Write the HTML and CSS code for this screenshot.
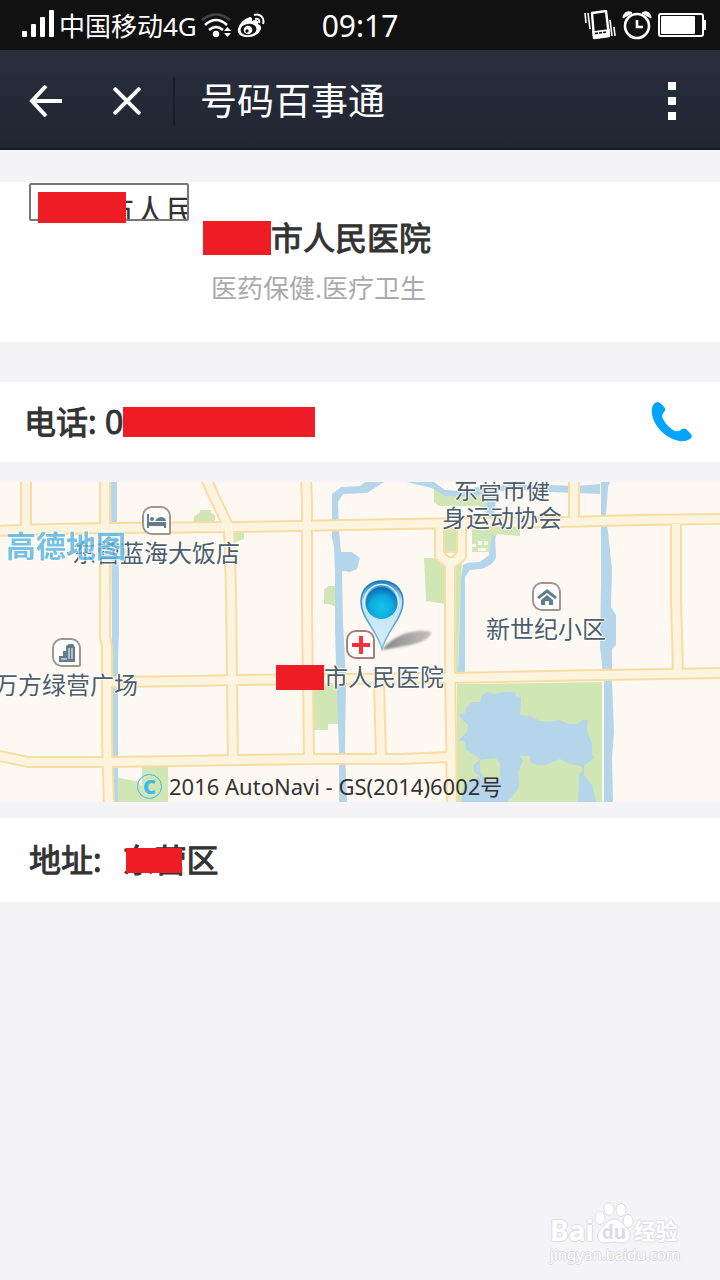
FILE: index.html
```html
<!DOCTYPE html>
<html lang="zh-CN">
<head>
    <meta charset="UTF-8">
    <meta name="viewport" content="width=device-width, initial-scale=1.0">
    <title>号码百事通</title>
    <link rel="stylesheet" href="styles.css">
</head>
<body>
    <div class="status-bar">
        <div class="status-left">
            <svg class="signal" width="34" height="28" viewBox="0 0 34 28" fill="#fff">
                <rect x="1" y="21" width="5" height="6" rx="1"/>
                <rect x="10" y="14" width="5" height="13" rx="1"/>
                <rect x="19" y="7" width="5" height="20" rx="1"/>
                <rect x="28" y="0" width="5" height="27" rx="1"/>
            </svg>
            <span class="carrier">中国移动4G</span>
            <svg width="32" height="26" viewBox="0 0 32 26" fill="none" stroke="#fff" stroke-width="2.6">
                <path d="M1 7 Q15 -4 29 7" stroke="#444"/>
                <path d="M4 12 Q15 2 26 12"/>
                <path d="M8 17 Q15 11 22 17"/>
                <circle cx="15" cy="21" r="3.200" fill="#fff" stroke="none"/>
                <path d="M23 18 l3.500 -4 3.500 4z M23 20 l3.500 4 3.500 -4z" fill="#fff" stroke="none"/>
            </svg>
            <svg width="28" height="26" viewBox="0 0 28 26">
                <path d="M11 5 C13 3 16 4 15 8 C19 6 22 7 21 11 C24 12 25 15 23 18 C20 23 14 24 10 24 C4 24 0 21 1 16 C2 11 7 6 11 5z" fill="#fff"/>
                <ellipse cx="11.500" cy="16.500" rx="8" ry="5.600" fill="#111" transform="rotate(-8 11.500 16.500)"/>
                <circle cx="11" cy="17" r="4.300" fill="#fff"/>
                <circle cx="10" cy="18" r="1.700" fill="#111"/>
                <path d="M17 2 C23 0 28 5 26 11 M18 6 C21 5 23 7 22 10" fill="none" stroke="#fff" stroke-width="2"/>
            </svg>
        </div>
        <time class="clock">09:17</time>
        <div class="status-right">
            <svg width="32" height="30" viewBox="0 0 32 30" fill="none" stroke="#fff" stroke-width="1.600">
                <path d="M1 3 L2 13 M4 3 L6 19 M26 10 L28 26 M30 17 L31 26"/>
                <path d="M8 3 L22 1 L25 26 L10 28z" stroke-width="2.400" stroke-linejoin="round"/>
                <path d="M9 22 L25 20 L25 26 L10 28z" fill="#fff"/>
                <path d="M11 23.500 L23 22" stroke="#111" stroke-dasharray="3 1"/>
            </svg>
            <svg width="30" height="30" viewBox="0 0 30 30" fill="none" stroke="#fff">
                <circle cx="15" cy="16" r="12" stroke-width="2.600"/>
                <path d="M15 10 V17 H21" stroke-width="2.600"/>
                <path d="M1 8 C1 3 6 0 10 3z M29 8 C29 3 24 0 20 3z" fill="#fff" stroke-width="1"/>
            </svg>
            <svg width="48" height="26" viewBox="0 0 48 26">
                <rect x="1" y="2" width="44" height="22" rx="2" fill="none" stroke="#fff" stroke-width="2"/>
                <rect x="3" y="4" width="34" height="18" rx="1" fill="#fff"/>
                <rect x="45" y="8" width="3" height="10" fill="#fff"/>
            </svg>
        </div>
    </div>

    <header class="nav-bar">
        <button class="nav-btn" type="button" aria-label="返回">
            <svg width="34" height="32" viewBox="0 0 34 32" fill="none" stroke="#fff" stroke-width="4">
                <path d="M17 1 L3 16 L17 31 M2 16 H33"/>
            </svg>
        </button>
        <button class="nav-btn close" type="button" aria-label="关闭">
            <svg width="28" height="28" viewBox="0 0 28 28" fill="none" stroke="#fff" stroke-width="4">
                <path d="M1 1 L27 27 M27 1 L1 27"/>
            </svg>
        </button>
        <h1 class="nav-title">号码百事通</h1>
        <button class="nav-btn more" type="button" aria-label="更多">
            <svg width="8" height="38" viewBox="0 0 8 38" fill="#fff">
                <rect y="0" width="8" height="8"/>
                <rect y="15" width="8" height="8"/>
                <rect y="30" width="8" height="8"/>
            </svg>
        </button>
    </header>

    <main>
        <section class="card profile">
            <div class="logo-wrap">
                <div class="logo">市人民</div>
                <span class="mask mask-logo"></span>
            </div>
            <div class="profile-text">
                <h2 class="name"><span class="mask mask-name"></span>市人民医院</h2>
                <p class="category">医药保健.医疗卫生</p>
            </div>
        </section>

        <section class="card phone">
            <p class="row-text">电话: 0<span class="mask mask-phone"></span></p>
            <a class="call" href="tel:0" aria-label="拨打电话">
                <svg width="42" height="42" viewBox="0 0 42 42" fill="#00a5fb">
                    <path d="M7 1 Q9 1 14 7 Q15 9 13 11 Q10 14 12 18 Q16 26 24 30 Q28 31 31 28 Q33 27 35 28 L40 33 Q42 36 39 38 Q34 41 28 40 Q11 36 3 20 Q-1 11 2 4 Q4 1 7 1z"/>
                </svg>
            </a>
        </section>

        <section class="map">
            <svg class="terrain" width="720" height="320" viewBox="0 0 720 320">
                <!-- parks -->
                <g fill="#d0e7b5">
                    <path d="M434 7 L445 10 L480 12 L488 9 V34 L480 24 H439 L434 20z"/>
                    <path d="M472 46 H520 V54 L497 52 L491 70 H472z"/>
                    <path d="M324 108 L328 104 H340 V126 L328 122 H324z"/>
                    <path d="M424 76 H446 V122 L426 119z"/>
                    <path d="M455 78 H462 L460 122 L458 190 H454z"/>
                    <path d="M313 202 H340 V242 H328 V248 H313z"/>
                    <path d="M194 35 L200 30 V28 H211 V31 L215 33 V41 H194z"/>
                    <path d="M235 51 H244 V57 L235 60z"/>
                    <path d="M46 70 L54 68 V75 H46z"/>
                    <path d="M114 295 L136 299 L142 304 V284 H168 V320 H114z"/>
                    <path d="M457 202 H480 L602 200 V320 H457z"/>
                </g>
                <path d="M478 59 h4 v4 h-4z M484 59 h4 v4 h-4z M472 62 h4 v3 h-4z M478 66 h8 v3 h-8z" fill="#fdf9f2"/>
                <!-- rivers and lake -->
                <g fill="#b4d5ea">
                    <path d="M111 0 H117 V50 L119 90 L119 150 L118 180 V320 H113z"/>
                    <path d="M365 0 H384 L367 11 L343 12 L338 20 L339 48 L341 70 H352 L360 76 L357 87 L350 90 L342 89 L343 140 L346 198 L345 270 L347 320 H339 V270 L335 150 V90 L334 65 L332 55 V12 L341 5 L360 4z"/>
                    <path d="M406 0 H434 L445 8 L460 9 L482 4 L520 3 L550 3 L575 4 L600 2 V12 L575 11 L550 10 L520 8 L497 9 L494 35 H487 L487 12 L470 14 L445 14 L432 6z"/>
                    <path d="M492 53 L495 54 L496 75 Q492 85 480 87 L470 88 L465 95 V190 H458 L461 97 L463 83 Q466 80 480 80 L489 73z"/>
                    <path d="M601 0 H610 L608 5 L606 35 L608 50 L612 88 L611 125 L616 133 V163 L612 167 V200 L614 250 L612 275 L613 320 H604 V200 L600 165 L601 100z"/>
                    <path d="M458 233 L465 231 L466 226 L472 220 H480 L482 213 L487 210 L494 212 L504 210 H515 L516 214 L521 215 L520 233 L530 234 L540 239 L550 240 L560 238 L568 242 L578 242 L583 238 L588 238 L587 248 L592 262 V272 L594 276 L584 284 V293 L592 303 L596 320 H578 L579 292 L583 288 L581 284 L570 282 L560 277 L545 283 L538 283 L530 280 V274 H520 L523 279 L518 290 L519 305 L512 315 L508 318 V320 H461 L463 308 L468 300 L480 294 L474 290 L473 284 L480 277 L473 272 L466 268 L465 260 L459 258 L467 250 L468 243z"/>
                </g>
                <path d="M480 278 L496 276 L500 282 V298 H486 L480 290z" fill="#d0e7b5"/>
                <!-- road edges, then road surface on top -->
                <g fill="none" stroke-linejoin="round">
                    <g stroke="#f9dca3" stroke-width="12">
                        <path d="M26 -5 V44 M105 -5 V155 L107 165 V260 L109 325 M205 -5 L229 46 L231 110 L232 200 L233 277"/>
                        <path d="M306 -5 L307 20 V130 L309 277 M379 200 L381 277 M574 -5 V40 M676 42 V120 L678 190"/>
                        <path d="M440 40 V74 L447 80 H454 L461 74 V40 M450 80 V180 L452 325"/>
                        <path d="M-5 49 L50 47 L110 46 L240 45 L350 43 L400 42 L480 41 L560 40 L640 38 L725 37"/>
                        <path d="M110 200 L190 199 L240 198 L450 196 L500 195 L600 193 L725 191"/>
                        <path d="M-5 273 L28 280 L110 280 L180 279 L240 278 L320 277 L400 277 L452 275"/>
                    </g>
                    <g stroke="#fcf4df" stroke-width="8">
                        <path d="M26 -5 V44 M105 -5 V155 L107 165 V260 L109 325 M205 -5 L229 46 L231 110 L232 200 L233 277"/>
                        <path d="M306 -5 L307 20 V130 L309 277 M379 200 L381 277 M574 -5 V40 M676 42 V120 L678 190"/>
                        <path d="M440 40 V74 L447 80 H454 L461 74 V40 M450 80 V180 L452 325"/>
                        <path d="M-5 49 L50 47 L110 46 L240 45 L350 43 L400 42 L480 41 L560 40 L640 38 L725 37"/>
                        <path d="M110 200 L190 199 L240 198 L450 196 L500 195 L600 193 L725 191"/>
                        <path d="M-5 273 L28 280 L110 280 L180 279 L240 278 L320 277 L400 277 L452 275"/>
                    </g>
                </g>
                <path d="M444 48 H457 V70 H444z" fill="#d0e7b5" stroke="#f9dca3" stroke-width="2"/>
            </svg>

            <span class="label label-hotel">东营蓝海大饭店</span>
            <span class="label label-plaza">万方绿营广场</span>
            <span class="label label-sports">东营市健<br>身运动协会</span>
            <span class="label label-estate">新世纪小区</span>
            <span class="label label-hospital"><span class="mask mask-label"></span>市人民医院</span>

            <span class="poi poi-hotel">
                <svg width="20" height="16" viewBox="0 0 20 16" fill="#627d8d">
                    <path d="M0 1 H2 V9 H19 V15 H17 V13 H2 V15 H0z"/>
                    <circle cx="5" cy="6" r="2"/>
                    <path d="M8 8 Q10 4 15 4 Q19 5 19 8z"/>
                </svg>
            </span>
            <span class="poi poi-plaza">
                <svg width="20" height="20" viewBox="0 0 20 20" fill="#627d8d">
                    <path d="M2 13 H6 V8 H9 V3 L12 1 H16 L18 4 V19 H2z"/>
                    <path d="M12 5 V16 M15 5 V16 M4 16 H10" stroke="#fff"/>
                </svg>
            </span>
            <span class="poi poi-estate">
                <svg width="20" height="18" viewBox="0 0 20 18" fill="#627d8d">
                    <path d="M10 1 L20 9 L18 11 L10 5 L2 11 L0 9z"/>
                    <path d="M10 7 L16 12 V17 H12 V13 H8 V17 H4 V12z"/>
                </svg>
            </span>
            <span class="poi poi-hospital">
                <svg width="18" height="18" viewBox="0 0 18 18" fill="#ff3038">
                    <path d="M7 0 H11 V7 H18 V11 H11 V18 H7 V11 H0 V7 H7z"/>
                </svg>
            </span>

            <svg class="marker" width="76" height="74" viewBox="0 0 76 74">
                <defs>
                    <linearGradient id="pin" x1="0" y1="0" x2="0" y2="1">
                        <stop offset="0" stop-color="#1583bf"/>
                        <stop offset="0.300" stop-color="#bfe2f5"/>
                        <stop offset="1" stop-color="#d9eef8"/>
                    </linearGradient>
                    <linearGradient id="edge" x1="0" y1="0" x2="0" y2="1">
                        <stop offset="0" stop-color="#1677b0"/>
                        <stop offset="1" stop-color="#7fc3e4"/>
                    </linearGradient>
                    <radialGradient id="ball" cx="0.500" cy="0.650" r="0.600">
                        <stop offset="0" stop-color="#13c4ec"/>
                        <stop offset="0.600" stop-color="#0fa9de"/>
                        <stop offset="1" stop-color="#0c71b2"/>
                    </radialGradient>
                    <linearGradient id="shade" x1="0" y1="0" x2="1" y2="0">
                        <stop offset="0" stop-color="#777" stop-opacity="0.900"/>
                        <stop offset="1" stop-color="#999" stop-opacity="0.600"/>
                    </linearGradient>
                    <filter id="soft"><feGaussianBlur stdDeviation="1"/></filter>
                </defs>
                <path d="M22 70 Q34 54 58 51 Q72 50 71 54 Q67 62 45 66z" fill="url(#shade)" filter="url(#soft)"/>
                <path d="M22 69 C17 50 1 38 1 22 C1 9 10 1 22 1 C34 1 43 9 43 22 C43 38 27 50 22 69z" fill="url(#pin)" stroke="url(#edge)" stroke-width="1.500"/>
                <circle cx="21.500" cy="21.500" r="17" fill="none" stroke="#d9effa" stroke-width="1.600"/>
                <circle cx="21.500" cy="23" r="16" fill="url(#ball)"/>
            </svg>

            <span class="map-brand">高德地图</span>
            <p class="copyright"><span class="c-mark">C</span>2016 AutoNavi - GS(2014)6002号</p>
        </section>

        <section class="card address">
            <p class="row-text">地址:</p>
            <p class="row-text district">东营区<span class="mask mask-address"></span></p>
        </section>
    </main>

    <footer class="watermark">
        <div class="wm-brand">
            <span>Bai</span>
            <svg width="40" height="42" viewBox="0 0 40 42" fill="#fff" stroke="#dcdce1">
                <ellipse cx="6" cy="16" rx="5" ry="6.500"/>
                <ellipse cx="15" cy="7" rx="5" ry="6.500"/>
                <ellipse cx="27" cy="8" rx="5" ry="6.500"/>
                <ellipse cx="34" cy="19" rx="5" ry="6.500"/>
                <path d="M20 17 C26 17 28 22 33 26 C39 31 36 41 29 41 C24 41 23 40 20 40 C17 40 15 41 10 41 C3 41 1 32 7 27 C12 22 14 17 20 17z"/>
                <text class="du" x="20" y="37" text-anchor="middle">du</text>
            </svg>
            <span class="wm-cn">经验</span>
        </div>
        <div class="wm-url">jingyan.baidu.com</div>
    </footer>
</body>
</html>
```

FILE: styles.css
```css
* {
    box-sizing: border-box;
}
body {
    margin: 0;
    min-height: 100vh;
    display: flex;
    flex-direction: column;
    background-color: #f3f3f8;
    color: #333;
    font-family: "Noto Sans", "Noto Sans CJK SC", sans-serif;
}
h1, h2, p {
    margin: 0;
    font-weight: normal;
}
svg {
    display: block;
    flex: none;
}

/* status bar */
.status-bar {
    display: grid;
    grid-template-columns: 1fr auto 1fr;
    align-items: center;
    height: 50px;
    padding: 2px 14px 0;
    background-color: #111;
    color: #fff;
}
.status-left,
.status-right {
    display: flex;
    align-items: center;
    gap: 4px;
}
.status-left {
    padding-left: 7px;
}
.status-right {
    justify-content: flex-end;
    gap: 6px;
    padding-bottom: 2px;
}
.signal {
    margin-bottom: 4px;
}
.carrier {
    font-size: 26px;
    line-height: 48px;
    white-space: nowrap;
}
.clock {
    font-size: 30px;
    line-height: 48px;
}

/* title bar */
.nav-bar {
    display: flex;
    align-items: center;
    height: 100px;
    padding: 4px 24px 0 29px;
    background: linear-gradient(#292e3d, #212531);
    border-bottom: 2px solid #191c26;
    color: #fff;
}
.nav-btn {
    display: flex;
    align-items: center;
    padding: 0;
    border: none;
    background: none;
    cursor: pointer;
}
.nav-btn.close {
    height: 48px;
    margin-left: 50px;
    padding-right: 32px;
    border-right: 2px solid #1a1d29;
    box-sizing: content-box;
}
.nav-title {
    margin-left: 25px;
    font-size: 37px;
    line-height: 48px;
}
.nav-btn.more {
    margin-left: auto;
    padding: 0 20px;
}

/* cards */
.card {
    display: flex;
    background-color: #fff;
}
.mask {
    display: inline-block;
    background-color: #ee1c25;
}
.profile {
    margin-top: 32px;
    height: 160px;
    padding-left: 29px;
}
.logo-wrap {
    position: relative;
    width: 160px;
    margin-top: 1px;
}
.logo {
    height: 38px;
    padding-left: 71px;
    border: 2px solid #777;
    border-radius: 2px;
    overflow: hidden;
    white-space: nowrap;
    font-size: 32px;
    line-height: 52px;
}
.mask-logo {
    position: absolute;
    left: 9px;
    top: 9px;
    width: 88px;
    height: 31px;
}
.profile-text {
    padding: 32px 0 0 14px;
}
.name {
    display: flex;
    align-items: center;
    font-size: 32px;
    line-height: 48px;
    -webkit-text-stroke: 1px #333;
}
.mask-name {
    width: 68px;
    height: 34px;
}
.category {
    padding-left: 8px;
    color: #aaa;
    font-size: 26px;
    line-height: 52px;
}
.phone {
    margin-top: 40px;
    height: 80px;
    padding: 0 27px 0 24px;
    align-items: center;
    justify-content: space-between;
}
.row-text {
    display: flex;
    align-items: center;
    font-size: 32px;
    line-height: 48px;
    white-space: pre;
    -webkit-text-stroke: 1px #333;
}
.mask-phone {
    width: 192px;
    height: 30px;
}
.address {
    height: 84px;
    padding: 0 29px;
    align-items: center;
    gap: 21px;
}
.district {
    position: relative;
}
.mask-address {
    position: absolute;
    left: 3px;
    top: 12px;
    width: 56px;
    height: 25px;
}

/* map */
.map {
    position: relative;
    height: 320px;
    margin: 20px 0 16px;
    overflow: hidden;
    background-color: #fdf9f2;
}
.terrain {
    position: absolute;
    left: 0;
    top: 0;
}
.label {
    position: absolute;
    color: #4c5d6b;
    font-size: 24px;
    line-height: 28px;
    white-space: nowrap;
    text-align: center;
    text-shadow: 1px 0 #fff, -1px 0 #fff, 0 1px #fff, 0 -1px #fff;
}
.label-hotel {
    left: 72px;
    top: 57px;
}
.label-plaza {
    left: -6px;
    top: 189px;
}
.label-sports {
    left: 442px;
    top: -6px;
}
.label-estate {
    left: 486px;
    top: 133px;
}
.label-hospital {
    display: flex;
    align-items: center;
    left: 276px;
    top: 181px;
}
.mask-label {
    width: 48px;
    height: 25px;
}
.poi {
    position: absolute;
    display: flex;
    align-items: center;
    justify-content: center;
    width: 29px;
    height: 29px;
    border: 2px solid #a3958b;
    border-radius: 10px 10px 2px 10px;
    background-color: #fff;
}
.poi-hotel {
    left: 142px;
    top: 24px;
}
.poi-plaza {
    left: 52px;
    top: 156px;
}
.poi-estate {
    left: 532px;
    top: 100px;
}
.poi-hospital {
    left: 346px;
    top: 148px;
    border-color: #a67f7c;
}
.marker {
    position: absolute;
    left: 360px;
    top: 98px;
}
.map-brand {
    position: absolute;
    left: 6px;
    top: 46px;
    color: #55b4e2;
    font-size: 30px;
    line-height: 36px;
    font-weight: bold;
    opacity: 0.8;
    text-shadow: 1px 0 #fff, -1px 0 #fff, 0 1px #fff, 0 -1px #fff;
}
.copyright {
    position: absolute;
    left: 137px;
    top: 290px;
    display: flex;
    align-items: center;
    gap: 7px;
    font-size: 22px;
    line-height: 28px;
    white-space: nowrap;
}
.c-mark {
    width: 25px;
    height: 25px;
    border: 1px solid #3bbdec;
    border-radius: 50%;
    color: #3bbdec;
    font-size: 20px;
    line-height: 23px;
    font-weight: 900;
    text-align: center;
}

/* watermark */
.watermark {
    align-self: flex-end;
    margin-top: auto;
    padding: 0 40px 16px 0;
    color: #fff;
    text-shadow: 1px 0 #dcdce1, -1px 0 #dcdce1, 0 1px #dcdce1, 0 -1px #dcdce1;
}
.wm-brand {
    display: flex;
    align-items: flex-end;
    font-size: 28px;
    line-height: 28px;
    font-weight: bold;
}
.wm-cn {
    font-size: 22px;
}
.du {
    fill: #dcdce1;
    stroke: none;
    font-size: 19px;
    text-shadow: none;
}
.wm-url {
    font-size: 15px;
    line-height: 20px;
    text-align: center;
}
```
